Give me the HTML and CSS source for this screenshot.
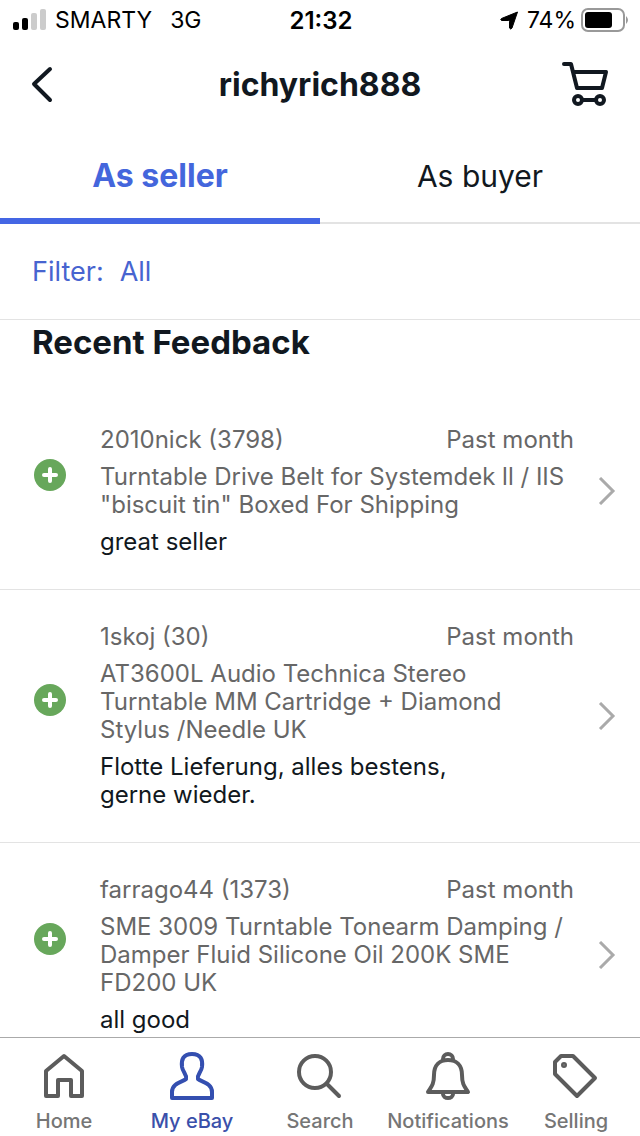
FILE: index.html
```html
<!DOCTYPE html>
<html lang="en">
<head>
<meta charset="utf-8">
<meta name="viewport" content="width=device-width, initial-scale=1">
<title>richyrich888 feedback</title>
<link rel="stylesheet" href="styles.css">
</head>
<body>
<div class="app">
  <div class="status">
    <div class="status-left">
      <svg width="34" height="22" viewBox="0 0 34 22" aria-hidden="true"><rect x="0" y="13" width="6" height="8" rx="2"/><rect x="9" y="9" width="6" height="12" rx="2"/><g fill="#ccc"><rect x="18" y="4" width="6" height="17" rx="2"/><rect x="27" y="0" width="6" height="21" rx="2"/></g></svg>
      <span class="carrier">SMARTY</span><span>3G</span>
    </div>
    <span class="clock">21:32</span>
    <div class="status-right">
      <svg width="19" height="19" viewBox="0 0 19 19" aria-hidden="true"><path d="M17.500 1 L12 17 Q10.500 19 9.500 17 V10.500 Q9.500 9.500 8.500 9.500 H1.500 Q0 8.500 1.500 7.500 Z" stroke="#000" stroke-linejoin="round"/></svg>
      <span class="charge">74%</span>
      <svg width="49" height="24" viewBox="0 0 49 24" aria-hidden="true"><rect x="2" y="1" width="42" height="22" rx="6" fill="none" stroke="#999" stroke-width="2"/><rect x="5" y="4" width="27" height="16" rx="3"/><path d="M46 8 Q50 12 46 16 Z" fill="#999"/></svg>
    </div>
  </div>
  <header class="header">
    <button class="icon-button back" aria-label="Back"><svg width="24" height="38" viewBox="0 0 24 38"><path d="M20 4 4 19 20 35" fill="none" stroke="#111820" stroke-width="4" stroke-linecap="round" stroke-linejoin="round"/></svg></button>
    <h1 class="title">richyrich888</h1>
    <button class="icon-button cart" aria-label="Basket"><svg width="48" height="46" viewBox="0 0 48 46" fill="none" stroke="#111820" stroke-width="4" stroke-linecap="round" stroke-linejoin="round"><path d="M2 3 H9 L15 27 H40 L44 11 H12"/><circle cx="16" cy="39" r="4"/><circle cx="38" cy="39" r="4"/><path d="M20 39 H34"/></svg></button>
  </header>
  <nav class="tabs" aria-label="Feedback type">
    <button class="tab active" aria-current="true">As seller</button>
    <button class="tab">As buyer</button>
  </nav>
  <button class="filter"><span>Filter:</span><span>All</span></button>
  <main class="feedback">
    <h2 class="section-title">Recent Feedback</h2>
    <a class="entry" href="#entry-1">
      <svg class="rating" width="32" height="32" viewBox="0 0 32 32" role="img" aria-label="Positive"><circle cx="16" cy="16" r="16" fill="#67a75b"/><path d="M16 10 V22 M10 16 H22" stroke="#fff" stroke-width="4" stroke-linecap="round"/></svg>
      <div class="details">
        <div class="meta"><span>2010nick (3798)</span><span>Past month</span></div>
        <div class="item">Turntable Drive Belt for Systemdek ll / IIS<br>"biscuit tin" Boxed For Shipping</div>
        <div class="comment">great seller</div>
      </div>
      <svg class="chevron" width="18" height="28" viewBox="0 0 18 28"><path d="M2 1 15 14 2 27"/></svg>
    </a>
    <a class="entry" href="#entry-2">
      <svg class="rating" width="32" height="32" viewBox="0 0 32 32" role="img" aria-label="Positive"><circle cx="16" cy="16" r="16" fill="#67a75b"/><path d="M16 10 V22 M10 16 H22" stroke="#fff" stroke-width="4" stroke-linecap="round"/></svg>
      <div class="details">
        <div class="meta"><span>1skoj (30)</span><span>Past month</span></div>
        <div class="item">AT3600L Audio Technica Stereo<br>Turntable MM Cartridge + Diamond<br>Stylus /Needle UK</div>
        <div class="comment">Flotte Lieferung, alles bestens,<br>gerne wieder.</div>
      </div>
      <svg class="chevron" width="18" height="28" viewBox="0 0 18 28"><path d="M2 1 15 14 2 27"/></svg>
    </a>
    <a class="entry" href="#entry-3">
      <svg class="rating" width="32" height="32" viewBox="0 0 32 32" role="img" aria-label="Positive"><circle cx="16" cy="16" r="16" fill="#67a75b"/><path d="M16 10 V22 M10 16 H22" stroke="#fff" stroke-width="4" stroke-linecap="round"/></svg>
      <div class="details">
        <div class="meta"><span>farrago44 (1373)</span><span>Past month</span></div>
        <div class="item">SME 3009 Turntable Tonearm Damping /<br>Damper Fluid Silicone Oil 200K SME<br>FD200 UK</div>
        <div class="comment">all good</div>
      </div>
      <svg class="chevron" width="18" height="28" viewBox="0 0 18 28"><path d="M2 1 15 14 2 27"/></svg>
    </a>
  </main>
  <nav class="bottom-bar" aria-label="Main">
    <a class="nav-link" href="#home"><svg class="nav-icon" viewBox="0 0 48 50"><path d="M6 45 V20 L24 5 L42 20 V45 H31 V29 H18 V45 Z"/></svg>Home</a>
    <a class="nav-link current" href="#my-ebay" aria-current="page"><svg class="nav-icon" viewBox="0 0 48 50"><path d="M24 3 C15 3 13 9 14 16 C15 22 19 23 18 28 C15 31 4 32 4 41 V47 H44 V41 C44 32 33 31 30 28 C29 23 33 22 34 16 C35 9 33 3 24 3 Z"/></svg>My eBay</a>
    <a class="nav-link" href="#search"><svg class="nav-icon" viewBox="0 0 48 50"><circle cx="19" cy="21" r="16"/><path d="M31 33 43 45"/></svg>Search</a>
    <a class="nav-link" href="#notifications"><svg class="nav-icon" viewBox="0 0 48 50"><path d="M10 24 C10 14 16 9 24 9 S38 14 38 24 C38 34 41 36 44 41 H4 C7 36 10 34 10 24 Z"/><path d="M19 8 A5 5 0 0 1 29 8 M19 43 A5 4 0 0 0 29 43"/></svg>Notifications</a>
    <a class="nav-link" href="#selling"><svg class="nav-icon" viewBox="0 0 48 50"><path d="M9 5 H21 L43 27 L25 45 L3 23 V11 Z"/><circle cx="12" cy="14" r="2" fill="currentColor" stroke-width="2"/></svg>Selling</a>
  </nav>
</div>
</body>
</html>
```

FILE: styles.css
```css
* {
  box-sizing: border-box;
}

body {
  margin: 0;
  background: #fff;
  color: #111820;
  font-family: Inter, "Liberation Sans", sans-serif;
}

button {
  border: 0;
  padding: 0;
  background: none;
  color: inherit;
  font: inherit;
  cursor: pointer;
}

svg {
  display: block;
  flex: none;
}

a {
  color: inherit;
  text-decoration: none;
}

.app {
  display: flex;
  flex-direction: column;
  height: 100vh;
}

.status {
  display: grid;
  grid-template-columns: 1fr auto 1fr;
  align-items: center;
  flex: none;
  height: 40px;
  padding: 0 11px 0 13px;
  color: #000;
  font-size: 23px;
}

.status-left,
.status-right {
  display: flex;
  align-items: center;
}

.status-left {
  gap: 8px;
}

.status-right {
  justify-content: flex-end;
  gap: 4px;
}

.carrier {
  margin-right: 10px;
}

.charge {
  margin-left: 4px;
}

.clock {
  font-size: 24px;
  font-weight: 600;
}

.header {
  display: grid;
  grid-template-columns: 1fr auto 1fr;
  align-items: center;
  flex: none;
  height: 88px;
  padding: 0 30px;
}

.title,
.section-title {
  margin: 0;
  font-size: 32px;
  font-weight: 700;
}

.icon-button.back {
  justify-self: start;
}

.icon-button.cart {
  justify-self: end;
}

.tabs {
  display: flex;
  flex: none;
  height: 96px;
}

.tab {
  flex: 1;
  padding-top: 2px;
  border-bottom: 2px solid #e3e3e3;
  font-size: 30px;
}

.tab.active {
  border-bottom: 6px solid #4466e4;
  padding-top: 4px;
  color: #4466dc;
  font-size: 32px;
  font-weight: 700;
}

.filter {
  display: flex;
  align-items: center;
  gap: 16px;
  flex: none;
  height: 96px;
  padding: 0 32px;
  border-bottom: 1px solid #e3e3e3;
  color: #4764d0;
  font-size: 27px;
}

.feedback {
  flex: 1;
  min-height: 0;
  overflow: hidden;
}

.section-title {
  padding: 4px 32px 33px;
  font-size: 33px;
  line-height: 36px;
}

.entry {
  display: flex;
  align-items: center;
  padding: 33px 24px 33px 34px;
  border-bottom: 1px solid #e3e3e3;
  font-size: 24px;
  line-height: 28px;
}

.rating {
  margin: 0 34px 32px 0;
}

.details {
  display: grid;
  gap: 9px;
  flex: 1;
  color: #676767;
}

.meta {
  display: flex;
  justify-content: space-between;
}

.comment {
  color: #111820;
}

.chevron {
  margin-left: 24px;
  fill: none;
  stroke: #aaa;
  stroke-width: 3;
}

.bottom-bar {
  display: grid;
  grid-template-columns: repeat(5, 1fr);
  flex: none;
  height: 99px;
  padding-top: 13px;
  border-top: 1px solid #aaa;
}

.nav-link {
  display: flex;
  flex-direction: column;
  align-items: center;
  gap: 8px;
  color: #767676;
  font-size: 20px;
  font-weight: 500;
  line-height: 24px;
}

.nav-icon {
  width: 48px;
  height: 50px;
  fill: none;
  stroke: #5c5c5c;
  stroke-width: 4;
  stroke-linecap: round;
  stroke-linejoin: round;
}

.current {
  color: #3a50aa;
}

.current .nav-icon {
  stroke: #344fb0;
}
```
